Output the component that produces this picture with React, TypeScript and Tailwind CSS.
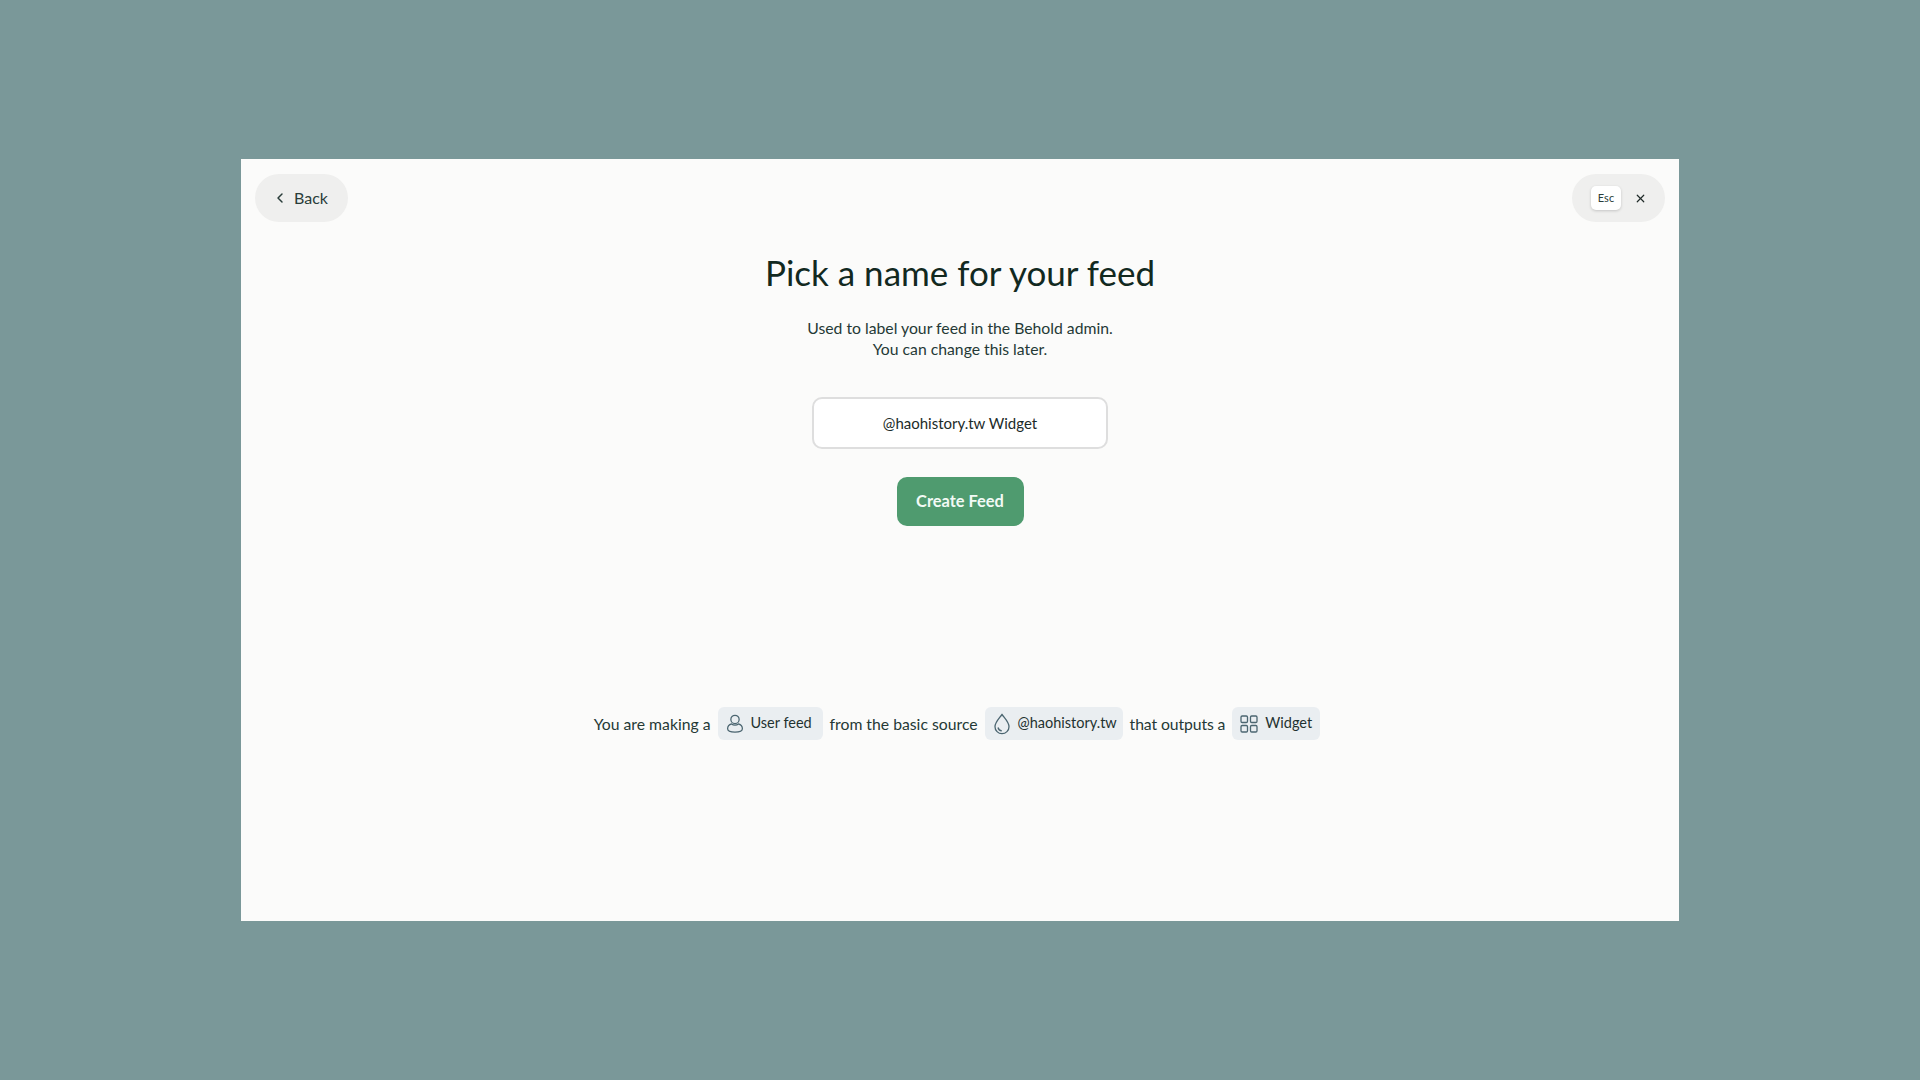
import React from "react";
import { ChevronLeft, X } from "lucide-react";

const bodyFont = "font-['Lato','Liberation_Sans',sans-serif]";

function UserIcon() {
  return (
    <svg width="18" height="21" viewBox="0 0 20 22" fill="none" stroke="#4b6570" strokeWidth="1.4">
      <circle cx="10" cy="6.5" r="4.6" />
      <path d="M6.2 11.500C3.400 12.400 1.800 14.400 1.800 16.800c0 2.400 2.200 3.700 8.200 3.700s8.200-1.300 8.200-3.700c0-2.400-1.600-4.400-4.400-5.300-1 .8-2.300 1.200-3.800 1.200s-2.800-.4-3.800-1.200Z" />
    </svg>
  );
}

function DropIcon() {
  return (
    <svg width="18" height="22" viewBox="0 0 18 22" fill="none" stroke="#4b6570" strokeWidth="1.3">
      <path d="M9 1.500c3 4.200 7 7.800 7 12.200a7 7 0 0 1-14 0C2 9.300 6 5.700 9 1.500Z" />
      <path d="M5 14.500c.4 1.900 1.800 3.100 3.800 3.300" />
    </svg>
  );
}

function GridIcon() {
  return (
    <svg width="18" height="18" viewBox="0 0 18 18" fill="none" stroke="#4b6570" strokeWidth="1.3">
      <rect x="1" y="1" width="6.500" height="6.500" rx="1.200" />
      <rect x="10.500" y="1" width="6.500" height="6.500" rx="1.200" />
      <rect x="1" y="10.500" width="6.500" height="6.500" rx="1.200" />
      <rect x="10.500" y="10.500" width="6.500" height="6.500" rx="1.200" />
    </svg>
  );
}

function Pill({ icon, label, width }: { icon: React.ReactNode; label: string; width: string }) {
  return (
    <span className={`inline-flex h-[33px] items-center gap-[7px] rounded-md bg-[#eaeef1] pl-[8px] text-[14.5px] text-[#1f3230] ${width}`}>
      {icon}
      <span className="-mt-[2px]">{label}</span>
    </span>
  );
}

export default function App() {
  return (
    <div className={`flex min-h-screen items-center justify-center bg-[#7a9899] ${bodyFont}`}>
      <div className="flex h-[762px] w-[1438px] flex-col bg-[#fbfbfa] px-[14px] py-[15px] text-[#1c2f2a]">
        <div className="flex items-start justify-between">
          <button className="flex h-[48px] w-[93px] items-center justify-center gap-[6px] rounded-full bg-[#efefee] pr-[3px] text-[16px] text-[#2a3d3a]">
            <ChevronLeft size={16} strokeWidth={2.2} />
            Back
          </button>
          <div className="flex h-[48px] w-[93px] items-center justify-end gap-[13px] rounded-full bg-[#efefee] pr-[18px]">
            <span className="flex h-[24px] w-[30px] items-center justify-center rounded-[5px] bg-white text-[11px] text-[#2a3d3a] shadow-[0_1px_3px_rgba(0,0,0,0.18)]">
              Esc
            </span>
            <X size={13} strokeWidth={2.2} className="text-[#1f2a28]" />
          </div>
        </div>

        <div className="mt-[26px] flex flex-col items-center">
          <h1 className="text-[35px] leading-[48px] text-[#12291f]">Pick a name for your feed</h1>
          <p className="mt-[21px] text-center text-[15.75px] leading-[21px] text-[#253936]">
            Used to label your feed in the Behold admin.
            <br />
            You can change this later.
          </p>
          <input
            readOnly
            value="@haohistory.tw Widget"
            className="mt-[38px] h-[52px] w-[296px] rounded-[10px] border-2 border-[#dedede] bg-white text-center text-[15px] text-[#1c2b29] outline-none"
          />
          <button className="mt-[28px] h-[49px] w-[127px] rounded-[10px] bg-[#4f9b6f] text-[16.4px] font-bold text-[#f2faf5]">
            Create Feed
          </button>
          <div className="mr-[6px] mt-[181px] flex items-center gap-[7px] text-[15.75px] text-[#253936]">
            <span>You are making a</span>
            <Pill icon={<UserIcon />} label="User feed" width="w-[105px]" />
            <span>from the basic source</span>
            <Pill icon={<DropIcon />} label="@haohistory.tw" width="w-[138px]" />
            <span className="tracking-[-0.1px]">that outputs a</span>
            <Pill icon={<GridIcon />} label="Widget" width="w-[88px]" />
          </div>
        </div>
      </div>
    </div>
  );
}
